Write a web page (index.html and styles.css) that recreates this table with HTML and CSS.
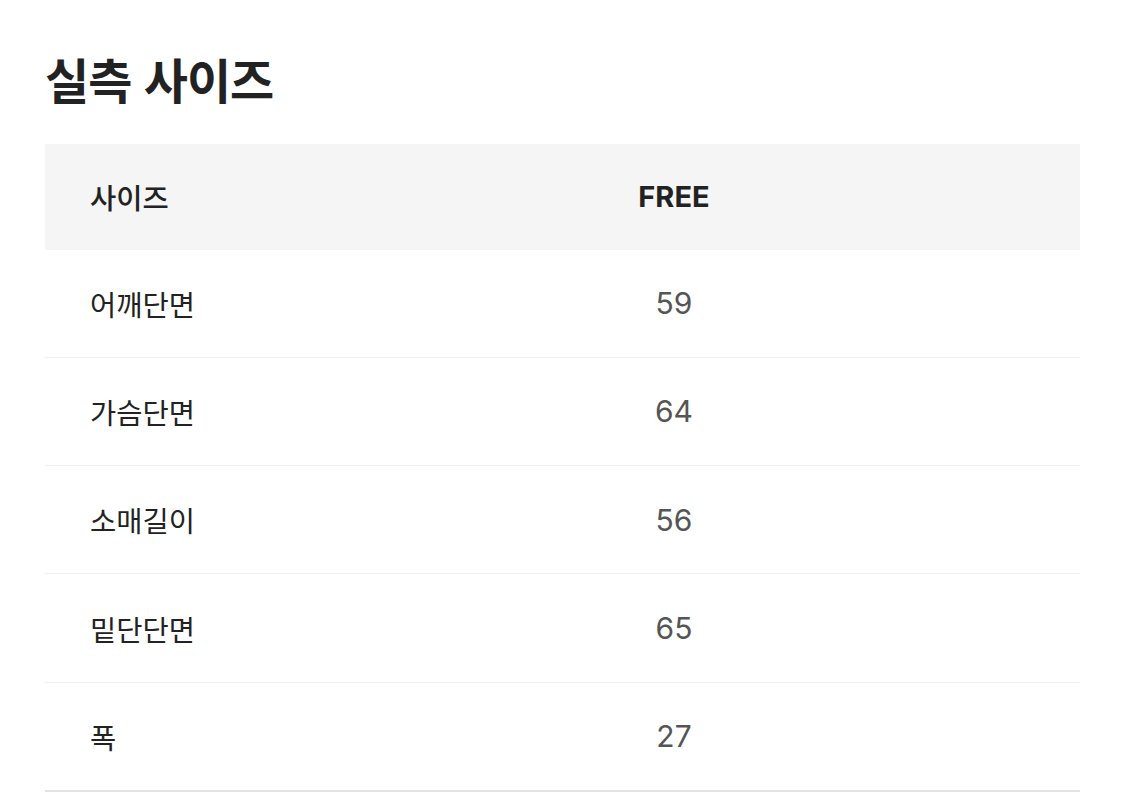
FILE: index.html
```html
<!DOCTYPE html>
<html lang="ko">
<head>
<meta charset="utf-8">
<link rel="stylesheet" href="styles.css">
</head>
<body>
<section class="size">
  <h1 class="title">실측 사이즈</h1>
  <div class="table">
    <div class="row head">
      <div class="label">사이즈</div>
      <div class="value">FREE</div>
    </div>
    <div class="row">
      <div class="label">어깨단면</div>
      <div class="value">59</div>
    </div>
    <div class="row">
      <div class="label">가슴단면</div>
      <div class="value">64</div>
    </div>
    <div class="row">
      <div class="label">소매길이</div>
      <div class="value">56</div>
    </div>
    <div class="row">
      <div class="label">밑단단면</div>
      <div class="value">65</div>
    </div>
    <div class="row last">
      <div class="label">폭</div>
      <div class="value">27</div>
    </div>
  </div>
</section>
</body>
</html>
```
FILE: styles.css
```css
html, body {
  margin: 0;
  padding: 0;
  background: #ffffff;
}
body {
  font-family: "Noto Sans CJK KR", "Noto Sans", sans-serif;
  color: #222222;
}
.size {
  padding: 0 45px;
}
.title {
  margin: 0;
  padding-top: 50px;
  height: 144px;
  box-sizing: border-box;
  font-size: 48px;
  line-height: 56px;
  font-weight: 700;
  letter-spacing: -1px;
  color: #222222;
}
.table {
  display: flex;
  flex-direction: column;
}
.row {
  display: grid;
  grid-template-columns: 223px 1fr;
  align-items: center;
  height: 108.3px;
  box-sizing: border-box;
  border-bottom: 1px solid #f1f1f1;
}
.row.head {
  height: 105.5px;
  background: #f5f5f5;
  border-bottom: none;
}
.row.last {
  height: 109px;
  border-bottom: 2px solid #e3e3e3;
}
.label {
  padding-left: 45px;
  font-size: 28.5px;
  font-weight: 400;
  color: #222222;
}
.head .label {
  font-weight: 500;
}
.value {
  text-align: center;
  font-family: "Inter", "Noto Sans CJK KR", sans-serif;
  font-size: 30px;
  color: #555555;
}
.head .value {
  font-weight: 700;
  color: #222222;
  font-size: 29px;
}
```
